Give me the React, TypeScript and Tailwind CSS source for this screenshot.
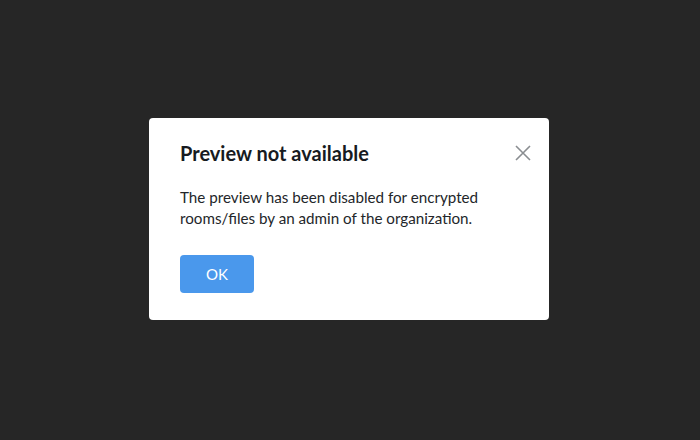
import React from "react";

export default function App() {
  return (
    <div
      className="w-[700px] h-[440px] bg-[#262626] flex justify-center pt-[118px] pr-[2px]"
      style={{ fontFamily: "Lato, 'Noto Sans', sans-serif" }}
    >
      <div className="w-[400px] h-[202px] bg-white rounded-[4px] relative pl-[31px] pt-[22px] flex flex-col">
        <h1 className="text-[20px] leading-[26px] font-bold text-[#171b21]">Preview not available</h1>
        <button className="absolute right-[17px] top-[26px] w-[18px] h-[18px] flex items-center justify-center">
          <svg width="16" height="16" viewBox="0 0 16 16" fill="none">
            <path d="M1 1L15 15M15 1L1 15" stroke="#8a8d91" strokeWidth="1.6" />
          </svg>
        </button>
        <p className="mt-[21px] text-[15.2px] leading-[21px] text-[#23262a] w-[345px]">
          The preview has been disabled for encrypted rooms/files by an admin of the organization.
        </p>
        <button className="mt-[26px] w-[74px] h-[38px] rounded-[4px] bg-[#4a98ec] text-white text-[15px]">
          OK
        </button>
      </div>
    </div>
  );
}
